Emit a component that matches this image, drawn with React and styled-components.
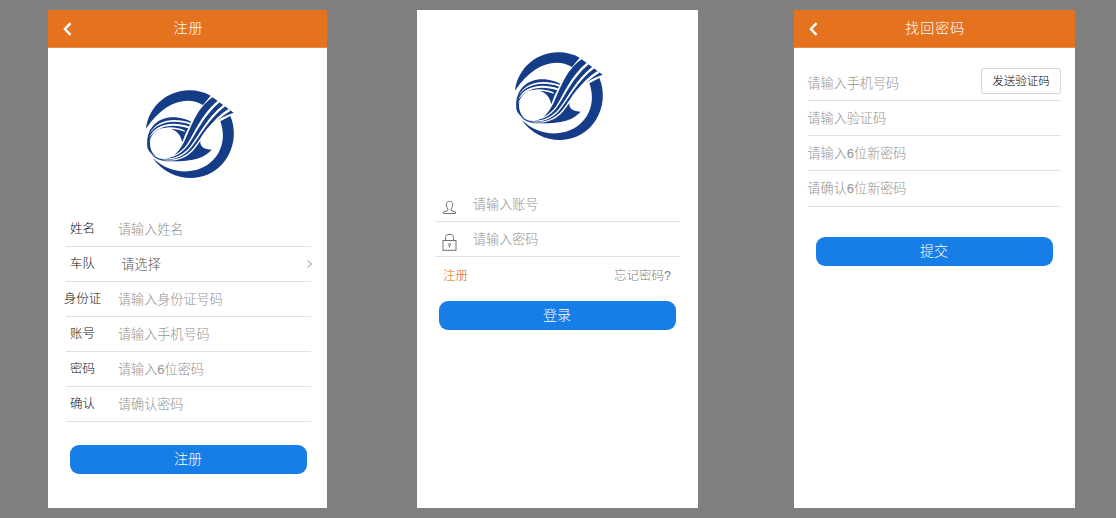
import React from "react";
import styled, { createGlobalStyle } from "styled-components";

const Global = createGlobalStyle`
  * { box-sizing: border-box; }
  body {
    margin: 0;
    background: #808080;
    font-family: "Liberation Sans", "Noto Sans CJK SC", sans-serif;
    font-weight: 300;
  }
`;

const Board = styled.main`
  display: flex;
  align-items: flex-start;
  width: 1116px;
  height: 518px;
  padding: 10px 0 0 48px;
  background: #808080;
  overflow: hidden;
`;

const Phone = styled.section`
  display: flex;
  flex-direction: column;
  flex: none;
  width: ${(p) => p.$width}px;
  height: 498px;
  margin-right: ${(p) => p.$after || 0}px;
  background: #fff;
`;

const Header = styled.header`
  display: grid;
  grid-template-columns: 41px 1fr 39px;
  flex: none;
  height: 38px;
  background: #e5721f;
  border-bottom: 1px solid #e98a45;
`;

const Back = styled.button`
  display: flex;
  align-items: center;
  padding: 1px 0 0 14px;
  border: 0;
  background: none;
`;

const Title = styled.h1`
  margin: 0;
  font-size: 14px;
  font-weight: 300;
  line-height: 36px;
  letter-spacing: 1px;
  text-align: center;
  color: #fff;
`;

const LogoBox = styled.div`
  display: flex;
  flex: none;
  height: ${(p) => p.$height}px;
  padding: ${(p) => p.$top}px 0 0 98px;
`;

const Form = styled.div`
  display: flex;
  flex-direction: column;
  margin: ${(p) => p.$margin};
`;

const Row = styled.label`
  display: flex;
  flex: none;
  height: ${(p) => p.$height || 35}px;
  border-bottom: 1px solid #e2e2e2;
`;

const Name = styled.span`
  flex: none;
  width: 52px;
  padding-right: 19px;
  display: flex;
  justify-content: center;
  font-size: 12.5px;
  line-height: 34px;
  white-space: nowrap;
  color: #111;
`;

const Hint = styled.span`
  flex: 1;
  font-size: 13.1px;
  line-height: 36px;
  white-space: nowrap;
  padding-left: ${(p) => p.$indent || 0}px;
  color: ${(p) => (p.$dark ? "#555" : "#929292")};
`;

const RowIcon = styled.span`
  flex: none;
  display: flex;
  align-items: flex-end;
  width: 38px;
  padding: 0 0 ${(p) => p.$bottom}px 7px;
`;

const Arrow = styled.span`
  display: flex;
  align-items: center;
  margin-right: -2px;
`;

const Submit = styled.button`
  display: block;
  flex: none;
  width: 237px;
  height: 29px;
  margin: ${(p) => p.$margin};
  padding: 0 1px 1px 0;
  border: 0;
  border-radius: 9px;
  background: #177ee8;
  color: #fff;
  font: inherit;
  font-size: 14px;
  line-height: 28px;
`;

const Links = styled.div`
  display: flex;
  justify-content: space-between;
  height: 44px;
  padding: 0 9px 0 8px;
  font-size: 12.5px;
  line-height: 38px;
`;

const TextLink = styled.a`
  color: ${(p) => (p.$accent ? "#e06200" : "#808080")};
`;

const SendCode = styled.button`
  flex: none;
  width: 80px;
  height: 26px;
  margin-top: 2px;
  padding: 0;
  border: 1px solid #d5d5d5;
  border-radius: 3px;
  background: #fff;
  color: #000;
  font: inherit;
  font-size: 11.5px;
  line-height: 24px;
  white-space: nowrap;
`;

function Logo() {
  return (
    <svg width="88" height="89" viewBox="18 30 264 267" fill="none">
      <g fill="#143c87">
        <path d="M18 146C26 80 81 31 148 31C171 31 194 37 212 47L189 75C141 46 72 64 18 146Z" />
        <path d="M271 108C291 155 282 213 247 252C193 313 91 308 38 234C74 268 121 281 164 271C231 255 265 190 241 124Z" />
        <path d="M218 52L281 98C237 112 202 139 186 168C174 190 182 208 215 209C188 239 150 244 85 244C64 243 45 237 33 221C48 233 62 237 75 237C102 235 122 208 135 180C153 142 170 84 218 52Z" />
        <path d="M22 200C16 140 60 107 108 112C126 114 143 119 154 126L147 140Q135 160 127 187C122 160 102 144 76 144C48 144 30 166 30 190C30 208 38 222 48 230C34 222 24 212 22 200Z" />
      </g>
      <g fill="#fff">
        <path d="M233 62L239 67C190 108 168 162 144 196C118 231 82 241 46 229C82 238 116 226 140 194C163 160 184 102 233 62Z" />
        <path d="M250 74L256 79C207 115 181 168 154 202C127 237 88 245 54 234C88 241 125 231 150 200C177 166 201 111 250 74Z" />
        <path d="M265 87L272 92C220 122 191 171 164 206C138 238 101 247 66 239C101 243 135 234 160 204C187 169 214 119 265 87Z" />
        <path d="M30 160C49 121 100 110 154 129L151 134C99 116 53 127 30 160Z" />
        <path d="M27 175C44 132 96 122 149 140L145 145C95 128 50 139 27 175Z" />
        <path d="M27 186C42 143 86 132 132 150L136 156C88 136 50 149 27 186Z" />
      </g>
    </svg>
  );
}

function BackIcon() {
  return (
    <svg width="11" height="16" viewBox="0 0 11 16" fill="none">
      <path d="M8.5 2.2L3 8L8.5 13.8" stroke="#fff" strokeWidth="2.5" />
    </svg>
  );
}

function PersonIcon() {
  return (
    <svg width="15" height="15" viewBox="0 0 15 15" fill="none" stroke="#707070">
      <path d="M6 9.5C4.6 7 4.1 5.2 4.4 3.4C4.9 .6 10.1 .6 10.6 3.4C10.9 5.2 10.4 7 9 9.5V10.5L13.5 12V13.5H1.5V12L6 10.5Z" />
    </svg>
  );
}

function LockIcon() {
  return (
    <svg width="15" height="18" viewBox="0 0 15 18" fill="none" stroke="#707070">
      <path d="M3.5 7.5V4.5C3.5 2.5 4.8 1.5 6 1.5H9C10.2 1.5 11.5 2.5 11.5 4.5V7.5" />
      <rect x="1" y="7.5" width="13" height="9.8" />
      <circle cx="7.5" cy="11.5" r="1" />
      <path d="M7.5 12.5V14.5" />
    </svg>
  );
}

const registerFields = [
  ["姓名", "请输入姓名"],
  ["车队", "请选择"],
  ["身份证", "请输入身份证号码"],
  ["账号", "请输入手机号码"],
  ["密码", "请输入6位密码"],
  ["确认", "请确认密码"],
];

function TopBar({ title }) {
  return (
    <Header>
      <Back><BackIcon /></Back>
      <Title>{title}</Title>
    </Header>
  );
}

export default function App() {
  return (
    <>
      <Global />
      <Board>
        <Phone $width={279} $after={90}>
          <TopBar title="注册" />
          <LogoBox $top={42} $height={164}><Logo /></LogoBox>
          <Form $margin="0 16px 0 18px">
            {registerFields.map(([name, hint]) => {
              const picker = name === "车队";
              return (
                <Row key={name}>
                  <Name>{name}</Name>
                  <Hint $dark={picker} $indent={picker ? 3.5 : 0}>{hint}</Hint>
                  {picker && (
                    <Arrow>
                      <svg width="7" height="10" viewBox="0 0 7 10" fill="none">
                        <path d="M1.5 1.5L5.5 5L1.5 8.5" stroke="#bbb" strokeWidth="1.2" />
                      </svg>
                    </Arrow>
                  )}
                </Row>
              );
            })}
          </Form>
          <Submit $margin="23px 0 0 22px">注册</Submit>
        </Phone>

        <Phone $width={280.5} $after={96.5}>
          <LogoBox $top={41.5} $height={177}><Logo /></LogoBox>
          <Form $margin="0 17.5px 0 18px">
            <Row>
              <RowIcon $bottom={6}><PersonIcon /></RowIcon>
              <Hint>请输入账号</Hint>
            </Row>
            <Row>
              <RowIcon $bottom={5}><LockIcon /></RowIcon>
              <Hint>请输入密码</Hint>
            </Row>
            <Links>
              <TextLink $accent>注册</TextLink>
              <TextLink>忘记密码?</TextLink>
            </Links>
          </Form>
          <Submit $margin="0 0 0 22px">登录</Submit>
        </Phone>

        <Phone $width={280.5}>
          <TopBar title="找回密码" />
          <Form $margin="18px 13.5px 0 13.5px">
            <Row>
              <Hint>请输入手机号码</Hint>
              <SendCode>发送验证码</SendCode>
            </Row>
            <Row><Hint>请输入验证码</Hint></Row>
            <Row><Hint>请输入6位新密码</Hint></Row>
            <Row $height={36}><Hint>请确认6位新密码</Hint></Row>
          </Form>
          <Submit $margin="30px 0 0 22px">提交</Submit>
        </Phone>
      </Board>
    </>
  );
}
